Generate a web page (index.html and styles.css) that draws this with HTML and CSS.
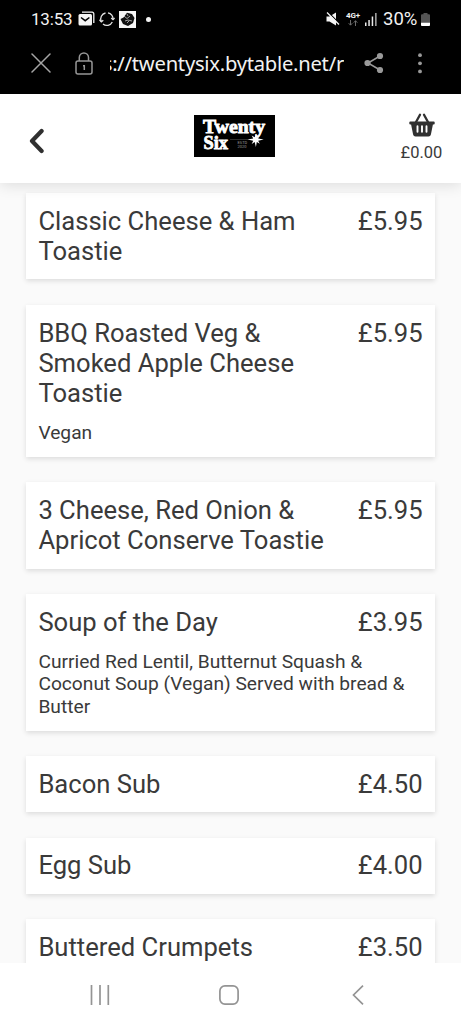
FILE: index.html
```html
<!DOCTYPE html>
<html lang="en">
<head>
<meta charset="utf-8">
<title>Twenty Six</title>
<link rel="stylesheet" href="styles.css">
</head>
<body>
<div class="phone">
  <div class="system">
    <div class="status">
      <span class="clock">13:53</span>
      <svg class="mail" width="17" height="16" viewBox="0 0 17 16"><path d="M4 1.2h10.2a1.6 1.6 0 0 1 1.600 1.600V12" fill="none" stroke="#f4f4f4" stroke-width="1.300"/><rect x=".5" y="3" width="13.500" height="11.500" rx="1.500" fill="#f4f4f4"/><path d="M3 6.500l4.200 3.200 4.200-3.200" fill="none" stroke="#000" stroke-width="1.500"/></svg>
      <svg class="sync" width="16" height="16" viewBox="0 0 16 16" fill="none" stroke="#e4e4e4" stroke-width="1.300"><path d="M2.300 10.500A6 6 0 0 1 6.500 2M9 1.900a6 6 0 0 1 5 6.500M13.300 11A6 6 0 0 1 4 13"/><path d="M.5 8.800l1.800 2 2-1.500M12.200 7l1.800 1.700L15.600 7"/></svg>
      <svg class="app" width="17" height="17" viewBox="0 0 17 17"><rect width="17" height="17" fill="#f6f6f6"/><path d="M8 1.800l5 1.200 2.500 4-1.500 5-5 3-5-2-2.500-5 3-1.500z" fill="#111"/><path d="M5 5l3 2.500L11 5M6 10l3-1 4 1M8 3l1 2M8 12l2-2" stroke="#c8c8c8" stroke-width=".8" fill="none"/></svg>
      <span class="dot"></span>
      <svg class="mute" width="14" height="14" viewBox="0 0 14 14"><path d="M.5 4.500h3L10 .5v13l-6.500-4h-3z" fill="#f4f4f4"/><path d="M2 0l12 12" stroke="#000" stroke-width="1.200"/><path d="M1 .5l12 12" stroke="#f4f4f4" stroke-width="1.300"/></svg>
      <span class="network"><b>4G+</b><svg width="10" height="6" viewBox="0 0 10 6" fill="none" stroke="#777" stroke-width=".9"><path d="M2.500 0v5M.7 3.200l1.800 2 1.800-2M7.500 6V.8M5.700 2.700l1.800-2 1.800 2"/></svg></span>
      <svg class="signal" width="12" height="13" viewBox="0 0 12 13" fill="#e8e8e8"><path d="M0 9.500h1.500V13H0zM3.300 7h1.500v6H3.300zM6.700 3.500h1.500V13H6.700z"/><path d="M10.100 0h1.500v13h-1.500z" fill="#aaa"/></svg>
      <span class="percent">30%</span>
      <svg class="battery" width="9" height="13" viewBox="0 0 9 13"><path d="M2.500 0h4v1.300H8q1 0 1 1V12q0 1-1 1H1q-1 0-1-1V2.300q0-1 1-1h1.500z" fill="#555"/><path d="M0 9.800h9V12q0 1-1 1H1q-1 0-1-1z" fill="#fff"/></svg>
    </div>
    <div class="browser">
      <svg class="close" width="20" height="20" viewBox="0 0 20 20"><path d="M1 1l18 18M19 1L1 19" stroke="#a5a5a5" stroke-width="1.500" stroke-linecap="round"/></svg>
      <svg class="lock" width="18" height="23" viewBox="0 0 18 23" fill="none" stroke="#969696" stroke-width="1.500"><path d="M4.300 9V5.500a4.600 4.600 0 0 1 9.200 0V9"/><rect x="1" y="9" width="16" height="13" rx="2"/><path d="M8 13.700h1.300V18"/></svg>
      <div class="address"><span>s://twentysix.bytable.net/r</span></div>
      <svg class="share" width="20" height="22" viewBox="0 0 20 22" fill="#9a9a9a"><path d="M16 4L4 11l12 7" fill="none" stroke="#9a9a9a" stroke-width="1.500"/><circle cx="16" cy="4" r="3.100"/><circle cx="3.500" cy="11" r="3.100"/><circle cx="16" cy="18" r="3.100"/></svg>
      <svg class="more" width="4" height="21" viewBox="0 0 4 21" fill="#999"><circle cx="2" cy="2.200" r="1.900"/><circle cx="2" cy="10.300" r="1.900"/><circle cx="2" cy="18.400" r="1.900"/></svg>
    </div>
  </div>
  <header class="header">
    <svg class="back" width="17" height="26" viewBox="0 0 17 26"><path d="M14.600 3L5 13l9.600 10" fill="none" stroke="#303030" stroke-width="4.200" stroke-linecap="round" stroke-linejoin="round"/></svg>
    <svg class="logo" width="81" height="42" viewBox="0 0 81 42">
      <rect width="81" height="42" fill="#000"/>
      <g class="wordmark"><text x="9" y="17.800" textLength="62" lengthAdjust="spacingAndGlyphs">Twenty</text><text x="9.500" y="34" textLength="24.500" lengthAdjust="spacingAndGlyphs">Six</text></g>
      <path d="M36 24.500h21" stroke="#444" stroke-width=".7"/>
      <path d="M62 18.500l.9 4 3-2.600-1.700 3.500 5.500 1.200-5.500 1.200 1.600 3-3-1.700-.9 5-1.200-5-3 2 1.500-3.300-5.500-1.200 5.500-1.200-1.500-3 3 1.900z" fill="#fff"/>
      <g class="established"><text x="43.500" y="29.300">ESTD</text><text x="43.500" y="33.400">2020</text></g>
    </svg>
    <div class="basket">
      <svg width="26" height="24" viewBox="0 0 26 24"><path d="M6.500 10L11 1.800M19.500 10L15 1.800" stroke="#303030" stroke-width="2.300" stroke-linecap="round"/><path d="M1.300 8.500h23.400q1 0 1 1v1q0 1-1 1h-.8l-2 10q-.4 2-2.400 2h-13q-2 0-2.400-2l-2-10h-.8q-1 0-1-1v-1q0-1 1-1z" fill="#303030"/><path d="M8.500 13.300v5.500M13 13.300v5.500M17.500 13.300v5.500" stroke="#fff" stroke-width="1.900" stroke-linecap="round"/></svg>
      <span>£0.00</span>
    </div>
  </header>
  <main class="menu">
    <article class="card"><div class="row"><h2>Classic Cheese &amp; Ham Toastie</h2><span class="price">£5.95</span></div></article>
    <article class="card"><div class="row"><h2>BBQ Roasted Veg &amp; Smoked Apple Cheese Toastie</h2><span class="price">£5.95</span></div><p>Vegan</p></article>
    <article class="card"><div class="row"><h2>3 Cheese, Red Onion &amp; Apricot Conserve Toastie</h2><span class="price">£5.95</span></div></article>
    <article class="card"><div class="row"><h2>Soup of the Day</h2><span class="price">£3.95</span></div><p>Curried Red Lentil, Butternut Squash &amp; Coconut Soup (Vegan) Served with bread &amp; Butter</p></article>
    <article class="card"><div class="row"><h2>Bacon Sub</h2><span class="price">£4.50</span></div></article>
    <article class="card"><div class="row"><h2>Egg Sub</h2><span class="price">£4.00</span></div></article>
    <article class="card"><div class="row"><h2>Buttered Crumpets</h2><span class="price">£3.50</span></div></article>
  </main>
  <nav class="navbar">
    <svg width="20" height="20" viewBox="0 0 20 20"><path d="M1.500 0v20M10 0v20M18.300 0v20" stroke="#949494" stroke-width="1.700"/></svg>
    <svg class="home" width="20" height="20" viewBox="0 0 20 20"><rect x=".9" y=".9" width="18.200" height="18.200" rx="5" fill="none" stroke="#949494" stroke-width="1.700"/></svg>
    <svg class="return" width="12" height="20" viewBox="0 0 12 20"><path d="M11 .7L1.500 10l9.500 9.300" fill="none" stroke="#949494" stroke-width="1.700"/></svg>
  </nav>
</div>
</body>
</html>
```
FILE: styles.css
```css
* { box-sizing: border-box; }
body { margin: 0; font-family: Roboto, sans-serif; color: #3a3a3a; }
svg { display: block; flex: none; }
.phone { width: 461px; height: 1024px; display: flex; flex-direction: column; overflow: hidden; background: #fafafa; }
.system { height: 93.500px; flex: none; background: #000; color: #f2f2f2; }
.status { height: 38px; display: flex; align-items: center; padding-left: 31px; }
.clock { width: 47px; font-size: 17px; letter-spacing: -.2px; }
.sync { margin-left: 4px; }
.app { margin-left: 4px; }
.dot { width: 5px; height: 5px; border-radius: 50%; background: #f4f4f4; margin-left: 10px; }
.mute { margin-left: 175px; }
.network { width: 14px; height: 14px; margin-left: 6px; display: flex; flex-direction: column; align-items: center; justify-content: space-between; font-size: 8px; line-height: 7px; letter-spacing: -.2px; }
.signal { margin-left: 5px; }
.percent { width: 38px; margin-left: 6px; font-size: 18.500px; }
.browser { height: 50px; display: flex; align-items: center; padding-left: 31px; }
.lock { margin-left: 24px; }
.address { width: 234px; height: 32px; margin-left: 17px; display: flex; justify-content: flex-end; overflow: hidden; font: 20.200px/32px "Noto Sans", sans-serif; letter-spacing: -.25px; white-space: nowrap; }
.share { margin-left: 20px; }
.more { margin-left: 34px; }
.header { height: 89.500px; flex: none; display: flex; align-items: flex-start; background: #fff; box-shadow: 0 2px 14px rgba(0,0,0,.12); z-index: 1; }
.back { margin: 34px 0 0 27px; }
.logo { margin: 21.500px 0 0 149.500px; }
.wordmark { fill: #fff; stroke: #fff; stroke-width: .8px; font: bold 18px "Liberation Serif", serif; }
.established { fill: #999; font: 4px Roboto, sans-serif; }
.basket { width: 50px; margin: 19px 0 0 122px; display: flex; flex-direction: column; align-items: center; gap: 6px; font-size: 16.500px; line-height: 20px; }
.menu { flex: 1; min-height: 0; overflow: hidden; padding: 10.100px 25.600px 0; display: flex; flex-direction: column; gap: 25.600px; }
.card { flex: none; padding: 12.800px; background: #fff; box-shadow: 0 2px 5px rgba(0,0,0,.12); }
.row { display: flex; justify-content: space-between; gap: 30px; font-size: 25.600px; line-height: 30.300px; }
.row h2 { margin: 0; font-size: inherit; font-weight: 400; }
.price { flex: none; }
.card p { margin: 13.300px 0 -.5px; font-size: 19.200px; line-height: 22.600px; }
.navbar { height: 61.500px; flex: none; z-index: 1; background: #fff; display: flex; align-items: center; padding: 4px 0 0 90px; }
.home { margin-left: 109px; }
.return { margin-left: 113px; }
```
